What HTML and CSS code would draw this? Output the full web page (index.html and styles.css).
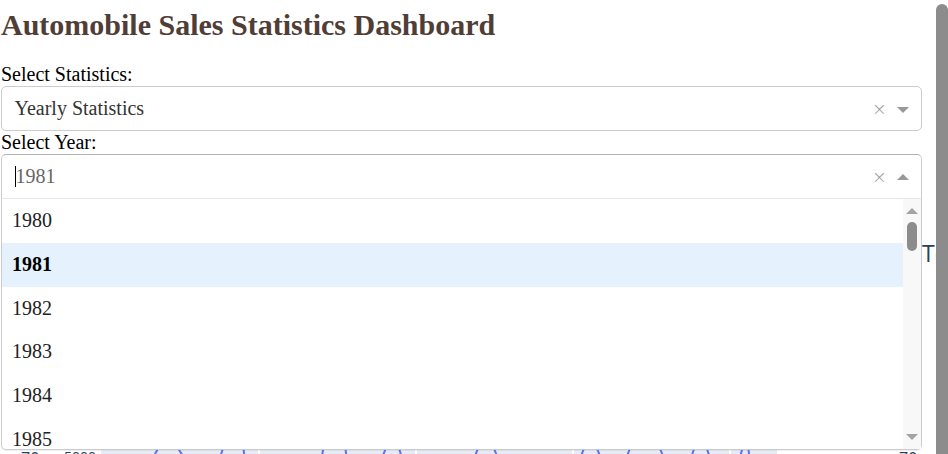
FILE: index.html
```html
<!DOCTYPE html>
<html>
<head>
<meta charset="utf-8">
<title>Automobile Sales Statistics Dashboard</title>
<link rel="stylesheet" href="styles.css">
</head>
<body>
<div class="page">
  <div class="main">
    <h1 class="title">Automobile Sales Statistics Dashboard</h1>

    <div class="field">
      <label class="lbl">Select Statistics:</label>
      <div class="select">
        <div class="control">
          <div class="value">Yearly Statistics</div>
          <span class="clear">×</span>
          <span class="arrow-zone"><span class="arrow down"></span></span>
        </div>
      </div>
    </div>

    <div class="field">
      <label class="lbl">Select Year:</label>
      <div class="select open">
        <div class="control">
          <div class="value typed"><span class="caret"></span>1981</div>
          <span class="clear">×</span>
          <span class="arrow-zone"><span class="arrow up"></span></span>
        </div>
        <div class="menu-outer">
          <div class="menu">
            <div class="options">
              <div class="opt">1980</div>
              <div class="opt sel">1981</div>
              <div class="opt">1982</div>
              <div class="opt">1983</div>
              <div class="opt">1984</div>
              <div class="opt">1985</div>
              <div class="opt">1986</div>
            </div>
            <div class="mscroll">
              <div class="sb-btn sb-up"></div>
              <div class="sb-thumb"></div>
              <div class="sb-fill"></div>
              <div class="sb-btn sb-down"></div>
            </div>
          </div>
        </div>
      </div>
    </div>

    <div class="chart">
      <svg class="chart-svg" width="935" height="300" viewBox="0 0 935 300" xmlns="http://www.w3.org/2000/svg">
        <text x="921" y="63" class="ctitle">To</text>
        <rect x="100" y="250" width="676" height="50" fill="#e5ecf6"/>
        <g stroke="#ffffff" stroke-width="2">
          <line x1="258" y1="250" x2="258" y2="300"/>
          <line x1="415" y1="250" x2="415" y2="300"/>
          <line x1="572" y1="250" x2="572" y2="300"/>
          <line x1="729" y1="250" x2="729" y2="300"/>
        </g>
        <g fill="none" stroke="#636efa" stroke-width="2">
          <path d="M150 262 L158 248 L175 246 L185 262"/>
          <path d="M218 262 L223 246 L242 246 L244 262"/>
          <path d="M320 262 L323 246 L344 246 L346 262"/>
          <path d="M380 262 L386 246 L397 246 L402 262"/>
          <path d="M472 262 L478 247 L492 247 L498 262"/>
          <path d="M578 262 L584 247 L595 247 L601 262"/>
          <path d="M624 262 L630 247 L658 247 L664 262"/>
          <path d="M689 262 L694 247 L705 247 L710 262"/>
          <path d="M738 262 L742 247 L747 247 L749 262"/>
        </g>
        <text x="63" y="263" class="tick">5000</text>
        <text x="20" y="265" class="axt">70</text>
        <text x="898" y="265" class="axt">70</text>
      </svg>
    </div>
  </div>
  <div class="vscroll"></div>
</div>
</body>
</html>
```

FILE: styles.css
```css
html, body {
  margin: 0;
  padding: 0;
  height: 454px;
  overflow: hidden;
  background: #ffffff;
}

body {
  font-family: "Liberation Serif", "Times New Roman", serif;
  color: #000;
}

.page {
  display: flex;
  height: 454px;
}

.main {
  width: 936px;
  padding-left: 1px;
  box-sizing: border-box;
  overflow: hidden;
  flex: none;
}

.title {
  margin: 8px 0 21px;
  font-size: 30px;
  line-height: 34px;
  font-weight: bold;
  color: #503D36;
}

.lbl {
  display: block;
  font-size: 20px;
  line-height: 23px;
}

.select {
  position: relative;
  width: 921px;
}

.control {
  height: 45px;
  box-sizing: border-box;
  border: 1px solid #ccc;
  border-radius: 5px;
  display: flex;
  align-items: center;
  background: #fff;
}

.open .control {
  border-radius: 5px 5px 0 0;
  border-color: #b3b3b3 #ccc #d9d9d9;
}

.value {
  flex: 1;
  padding-left: 12.5px;
  font-size: 20px;
  color: #333;
  white-space: nowrap;
}

.value.typed {
  color: #666;
  display: flex;
  align-items: center;
}

.caret {
  display: inline-block;
  width: 1px;
  height: 21px;
  background: #000;
}

.clear {
  width: 21px;
  text-align: center;
  color: #999;
  font-size: 22px;
  line-height: 1;
  font-family: "DejaVu Sans", sans-serif;
  font-weight: 300;
  transform: scale(0.8);
}

.arrow-zone {
  width: 31px;
  padding-right: 6px;
  box-sizing: border-box;
  display: flex;
  justify-content: center;
  align-items: center;
}

.arrow {
  width: 0;
  height: 0;
  border-style: solid;
}

.arrow.down {
  border-width: 6px 6px 0;
  border-color: #999 transparent transparent;
  margin-top: 3px;
}

.arrow.up {
  border-width: 0 6px 6px;
  border-color: transparent transparent #999;
}

.menu-outer {
  position: absolute;
  top: 100%;
  left: 0;
  right: 0;
  margin-top: -1px;
  border: 1px solid #ccc;
  border-top-color: #e6e6e6;
  border-radius: 0 0 5px 5px;
  background: #fff;
  box-shadow: 0 1px 0 rgba(0, 0, 0, 0.06);
  z-index: 2;
}

.menu {
  height: 250px;
  overflow: hidden;
  display: flex;
}

.options {
  flex: 1;
}

.opt {
  height: 43.75px;
  line-height: 43.75px;
  padding: 0 10px;
  font-size: 20px;
  color: #222;
}

.opt.sel {
  background: #e5f1fd;
  font-weight: bold;
  color: #000;
}

.mscroll {
  width: 18px;
  flex: none;
  background: #f8f8f8;
  display: flex;
  flex-direction: column;
  align-items: center;
}

.sb-btn {
  width: 18px;
  display: flex;
  justify-content: center;
  align-items: center;
}

.sb-btn::before {
  content: "";
  width: 0;
  height: 0;
  border-style: solid;
}

.sb-up {
  height: 22px;
  padding-top: 1px;
  box-sizing: border-box;
}

.sb-up::before {
  border-width: 0 6px 6px;
  border-color: transparent transparent #a3a3a3;
}

.sb-down {
  height: 25px;
}

.sb-down::before {
  border-width: 6px 6px 0;
  border-color: #a3a3a3 transparent transparent;
}

.sb-thumb {
  width: 10px;
  height: 29px;
  margin-top: 1px;
  border-radius: 5px;
  background: #8c8c8c;
}

.sb-fill {
  flex: 1;
}

.chart {
  height: 300px;
}

.chart-svg {
  display: block;
}

.ctitle {
  font-family: "Open Sans", sans-serif;
  font-size: 23px;
  fill: #2a3f5f;
}

.tick {
  font-family: "Open Sans", sans-serif;
  font-size: 14px;
  fill: #2a3f5f;
}

.axt {
  font-family: "Open Sans", sans-serif;
  font-size: 16px;
  fill: #2a3f5f;
}

.vscroll {
  width: 12px;
  flex: none;
  margin-top: 4px;
  border-radius: 6px 6px 0 0;
  background: #8c8c8c;
}
```
